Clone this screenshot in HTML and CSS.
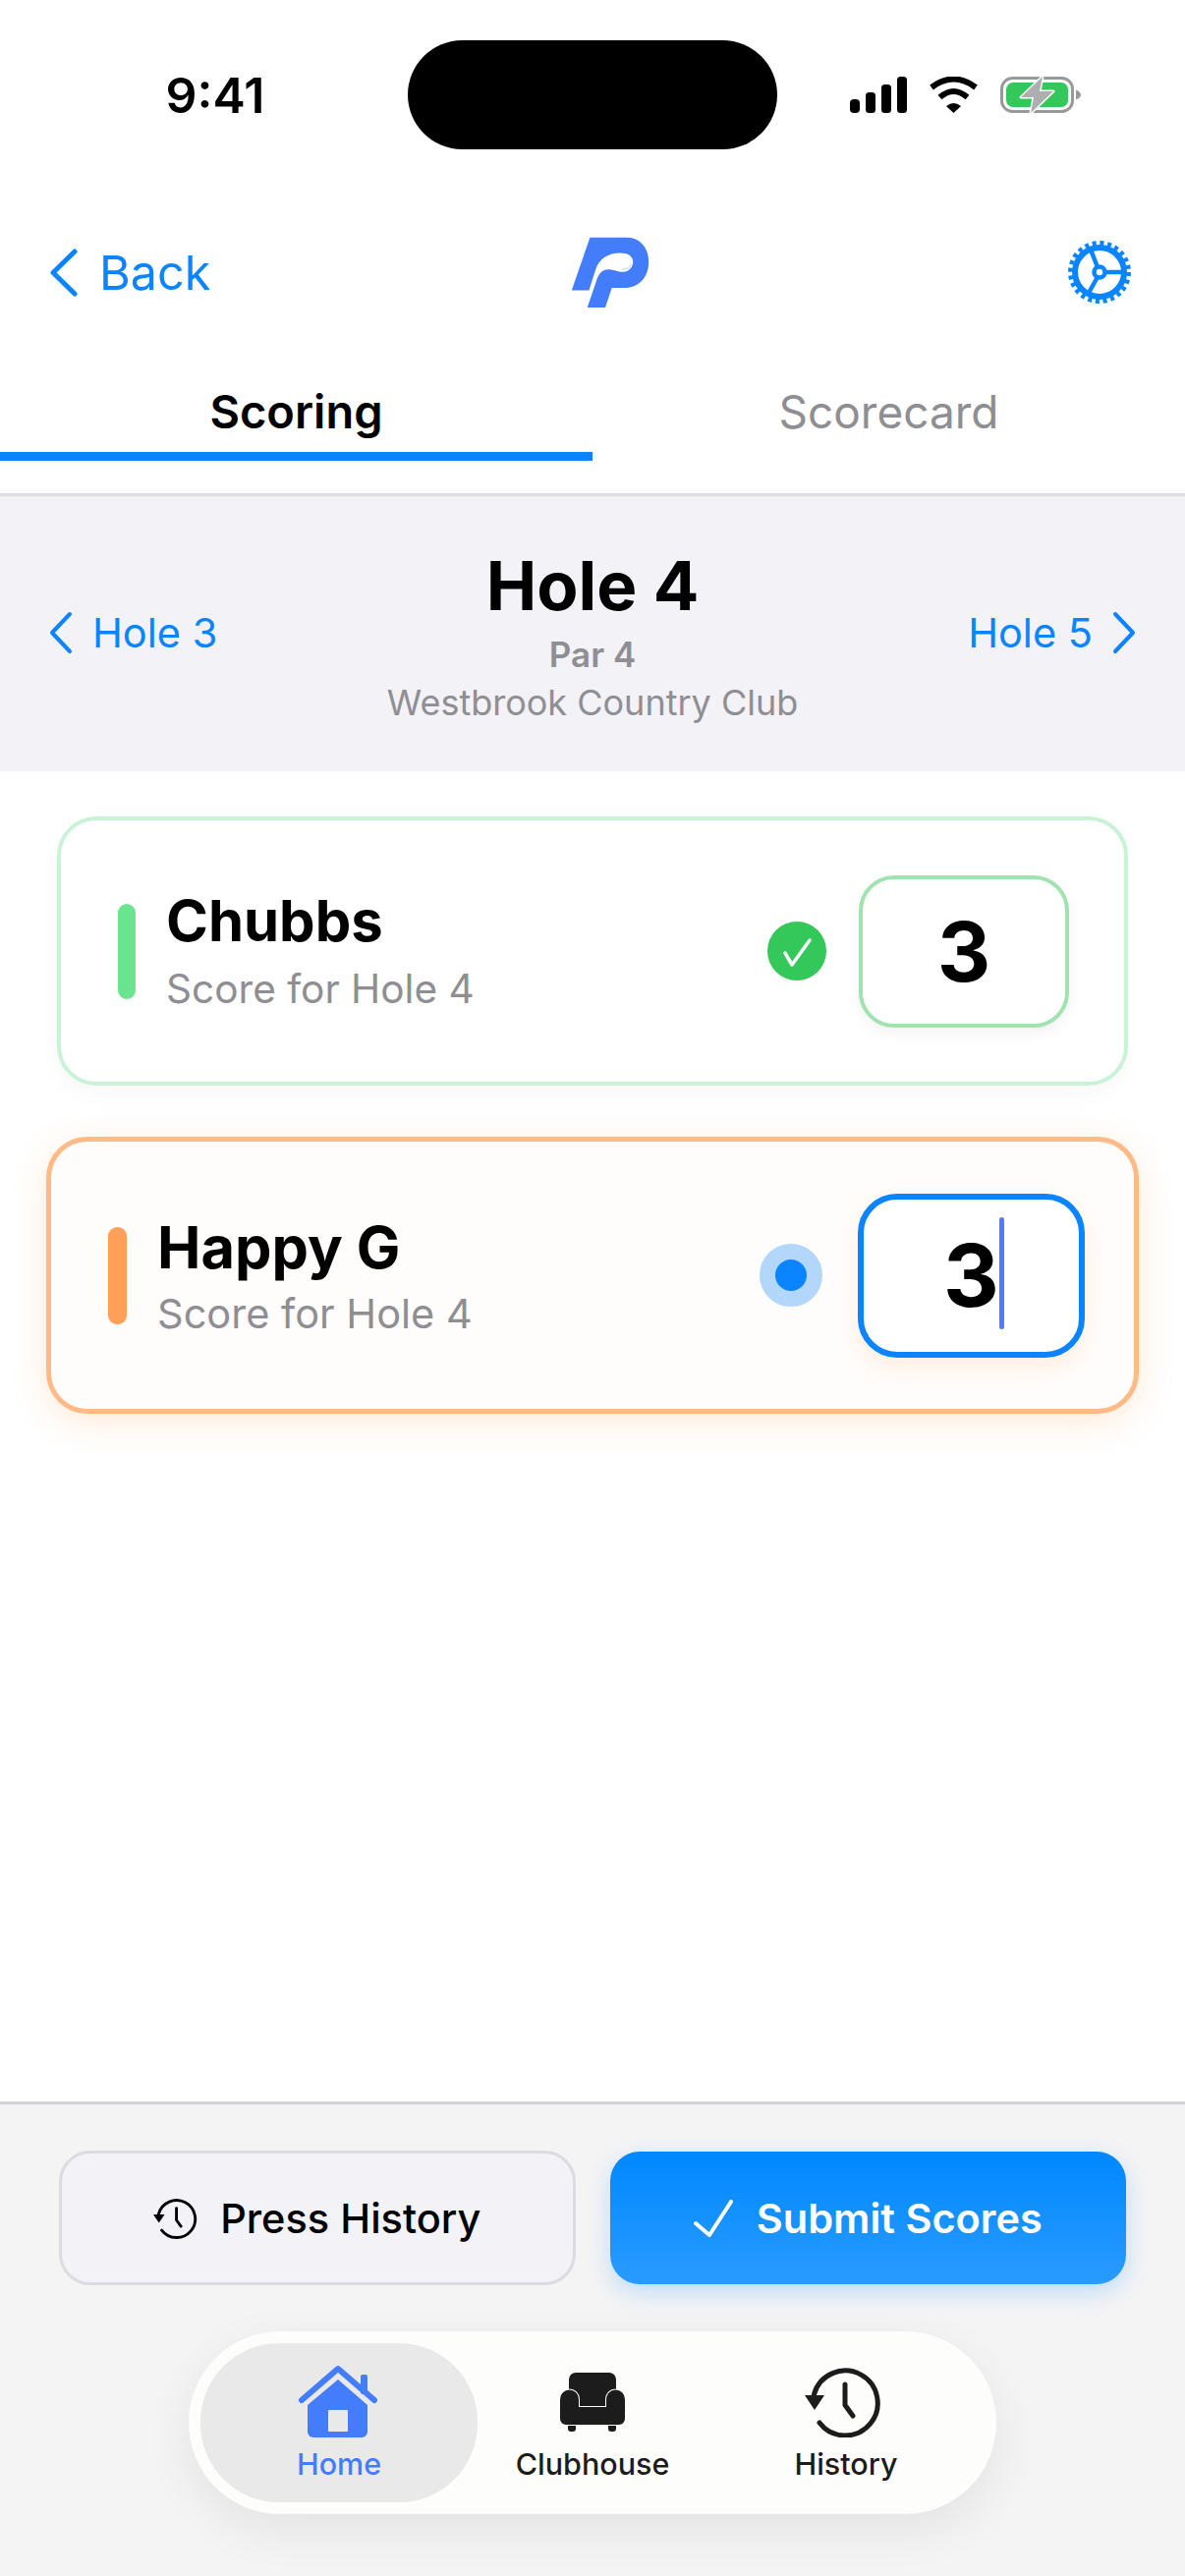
FILE: index.html
```html
<!DOCTYPE html>
<html>
<head>
    <title>Scoring</title>
    <link rel="stylesheet" href="styles.css">
</head>
<body>
    <svg class="defs" width="0" height="0">
        <symbol id="clock" viewBox="0 0 80 72">
            <path d="M9.5 28A33 33 0 1 1 15 57" fill="none" stroke="currentColor" stroke-width="5" stroke-linecap="round"/>
            <polygon points="0,29 20,29 10,44" fill="currentColor"/>
            <path d="M41 18V39L49 50" fill="none" stroke="currentColor" stroke-width="5" stroke-linecap="round" stroke-linejoin="round"/>
        </symbol>
    </svg>

    <div class="phone">
        <div class="status-bar">
            <div class="time">9:41</div>
            <div class="island"></div>
            <div class="status-icons">
                <svg width="58" height="37" viewBox="0 0 58 37" fill="#000">
                    <rect x="0" y="23" width="10" height="14" rx="4"/>
                    <rect x="16" y="16" width="10" height="21" rx="3.5"/>
                    <rect x="32" y="8" width="10" height="29" rx="3.5"/>
                    <rect x="48" y="0" width="10" height="37" rx="3.5"/>
                </svg>
                <svg width="51" height="37" viewBox="0 0 51 37">
                    <path d="M3 11Q25.5-6 48 11" fill="none" stroke="#000" stroke-width="6"/>
                    <path d="M11.5 21Q25.5 9 39.5 21" fill="none" stroke="#000" stroke-width="6"/>
                    <path d="M18 30Q25.5 24 33 30L25.5 37Z"/>
                </svg>
                <svg width="82" height="39" viewBox="0 0 82 39">
                    <rect x="1.5" y="2.5" width="72" height="34" rx="11" fill="none" stroke="#999" stroke-width="3"/>
                    <rect x="6" y="7" width="63" height="25" rx="7" fill="#34c759"/>
                    <path d="M77 14.5c3 1 5 3 5 5s-2 4-5 5Z" fill="#999"/>
                    <polygon points="43,1 21,22 34,22 31,38 54,16 40,16" fill="#aeaeb0" stroke="#fff" stroke-width="3" stroke-linejoin="round" paint-order="stroke"/>
                </svg>
            </div>
        </div>

        <div class="top-bar">
            <div class="back">
                <svg width="30" height="49" viewBox="0 0 30 49"><path d="M26 3L4 24.5L26 46" fill="none" stroke="#0a84ff" stroke-width="5" stroke-linecap="round" stroke-linejoin="round"/></svg>
                <span>Back</span>
            </div>
            <svg class="logo" width="80" height="73" viewBox="120 58 240 220">
                <path d="M178 60L290 60C335 60 358 95 358 135C358 185 325 215 285 215L245 215L225 275L170 275L197 195C205 170 215 158 235 158C250 158 262 166 280 166C298 166 310 150 310 135C310 118 295 108 270 108C235 108 205 125 195 160L175 222L122 222Z" fill="#437dfb"/>
                <path d="M276 158C290 158 300 152 304 142" fill="none" stroke="#b9d0fd" stroke-width="3"/>
            </svg>
            <svg class="gear" width="66" height="66" viewBox="0 0 66 66" fill="none" stroke="#0a84ff">
                <circle cx="33" cy="33" r="29" stroke-width="6" stroke-dasharray="4 3.6"/>
                <circle cx="33" cy="33" r="25" stroke-width="6"/>
                <path d="M31 28L24 10M38 33H57M31 38L22 54" stroke-width="4.5"/>
                <circle cx="33" cy="33" r="5.5" stroke-width="4.5" fill="#fff"/>
            </svg>
        </div>

        <div class="tabs">
            <div class="tab tab-active">Scoring</div>
            <div class="tab">Scorecard</div>
        </div>

        <div class="hole-nav">
            <div class="hole-link">
                <svg width="24" height="44" viewBox="0 0 24 44"><path d="M21 3L3 22L21 41" fill="none" stroke="#0a84ff" stroke-width="4" stroke-linecap="round" stroke-linejoin="round"/></svg>
                <span>Hole 3</span>
            </div>
            <div class="hole-info">
                <div class="hole-title">Hole 4</div>
                <div class="hole-par">Par 4</div>
                <div class="hole-club">Westbrook Country Club</div>
            </div>
            <div class="hole-link hole-link-next">
                <span>Hole 5</span>
                <svg width="24" height="44" viewBox="0 0 24 44"><path d="M3 3L21 22L3 41" fill="none" stroke="#0a84ff" stroke-width="4" stroke-linecap="round" stroke-linejoin="round"/></svg>
            </div>
        </div>

        <div class="scores">
            <div class="player-card card-done">
                <div class="accent"></div>
                <div class="player-text">
                    <div class="player-name">Chubbs</div>
                    <div class="player-sub">Score for Hole 4</div>
                </div>
                <svg class="status-check" width="60" height="60" viewBox="0 0 60 60">
                    <circle cx="30" cy="30" r="30" fill="#34c759"/>
                    <path d="M18 32L25 44L43 19" fill="none" stroke="#fff" stroke-width="3.5" stroke-linecap="round" stroke-linejoin="round"/>
                </svg>
                <div class="score-box"><span class="score-digit">3</span></div>
            </div>

            <div class="player-card card-active">
                <div class="accent"></div>
                <div class="player-text">
                    <div class="player-name">Happy G</div>
                    <div class="player-sub">Score for Hole 4</div>
                </div>
                <div class="status-dot"></div>
                <div class="score-box"><span class="score-digit">3<i class="caret"></i></span></div>
            </div>
        </div>

        <div class="footer">
            <div class="actions">
                <div class="btn btn-secondary">
                    <svg width="46" height="42"><use href="#clock"/></svg>
                    <span>Press History</span>
                </div>
                <div class="btn btn-primary">
                    <svg width="40" height="38" viewBox="0 0 40 38"><path d="M2 24L16 36L38 2" fill="none" stroke="#fff" stroke-width="4" stroke-linecap="round" stroke-linejoin="round"/></svg>
                    <span>Submit Scores</span>
                </div>
            </div>

            <div class="bottom-nav">
                <div class="nav-item nav-active">
                    <div class="nav-icon">
                        <svg width="90" height="76" viewBox="1 0 90 76">
                            <rect x="68" y="10" width="7" height="20" rx="2" fill="#437dfb"/>
                            <path d="M8 36L45 4L82 36" fill="none" stroke="#437dfb" stroke-width="6" stroke-linecap="round" stroke-linejoin="round"/>
                            <path d="M45 15L14 41V68a6 6 0 0 0 6 6H69a6 6 0 0 0 6-6V41Z" fill="#437dfb"/>
                            <rect x="35" y="46" width="20" height="22" fill="#e9e9ea"/>
                        </svg>
                    </div>
                    <span>Home</span>
                </div>
                <div class="nav-item">
                    <div class="nav-icon">
                        <svg width="66" height="60" viewBox="0 0 66 60">
                            <rect x="9" y="0" width="48" height="36" rx="7" fill="#1c1c1c"/>
                            <rect x="8" y="50" width="8" height="10" rx="3" fill="#1c1c1c"/>
                            <rect x="49" y="50" width="8" height="10" rx="3" fill="#1c1c1c"/>
                            <path d="M0 27a9.5 9.5 0 0 1 19 0V35H47V27a9.5 9.5 0 0 1 19 0V47a6 6 0 0 1-6 6H6a6 6 0 0 1-6-6Z" fill="#1c1c1c" stroke="#fdfdfc" stroke-width="2" paint-order="stroke"/>
                        </svg>
                    </div>
                    <span>Clubhouse</span>
                </div>
                <div class="nav-item">
                    <div class="nav-icon">
                        <svg class="clock-icon" width="80" height="72"><use href="#clock"/></svg>
                    </div>
                    <span>History</span>
                </div>
            </div>
        </div>
    </div>
</body>
</html>
```

FILE: styles.css
```css
* {
    box-sizing: border-box;
}

body {
    margin: 0;
    font-family: Inter, "Noto Sans", sans-serif;
    background: #fff;
    color: #000;
}

.defs {
    display: block;
    height: 0;
}

.phone {
    height: 2622px;
    display: flex;
    flex-direction: column;
    overflow: hidden;
}

.status-bar {
    display: grid;
    grid-template-columns: 415px 376px 415px;
    align-items: center;
    padding-top: 41px;
}

.time {
    font-size: 50px;
    font-weight: 600;
    text-align: center;
    padding-left: 23px;
}

.island {
    height: 111px;
    background: #000;
    border-radius: 56px;
}

.status-icons {
    display: flex;
    align-items: center;
    gap: 22px;
    padding-left: 74px;
}

.top-bar {
    display: grid;
    grid-template-columns: 531px 80px 1fr;
    align-items: center;
    height: 74px;
    margin-top: 88px;
    padding: 0 54px 0 50px;
}

.back {
    display: flex;
    align-items: center;
    gap: 21px;
    color: #0a84ff;
    font-size: 48.5px;
}

.gear {
    justify-self: end;
}

.tabs {
    display: flex;
    padding-top: 81px;
    padding-bottom: 33px;
    border-bottom: 3px solid #dedee2;
}

.tab {
    flex: 1;
    height: 74px;
    line-height: 48px;
    text-align: center;
    font-size: 46px;
    color: #8e8e93;
}

.tab-active {
    color: #000;
    font-weight: 600;
    font-size: 47px;
    border-bottom: 9px solid #0a84ff;
}

.hole-nav {
    display: grid;
    grid-template-columns: 1fr auto 1fr;
    align-items: center;
    height: 280px;
    padding: 0 50px;
    background: #f2f2f7;
}

.hole-link {
    display: flex;
    align-items: center;
    gap: 20px;
    margin-bottom: 2px;
    color: #0a84ff;
    font-size: 41.5px;
}

.hole-link-next {
    justify-content: flex-end;
}

.hole-info {
    text-align: center;
}

.hole-title {
    font-size: 69px;
    font-weight: 700;
    line-height: 80px;
}

.hole-par {
    margin-top: 10px;
    font-size: 35px;
    font-weight: 600;
    line-height: 40px;
    color: #8e8e93;
}

.hole-club {
    margin-top: 9px;
    font-size: 36px;
    line-height: 40px;
    color: #8e8e93;
}

.scores {
    flex: 1;
    padding-top: 46px;
}

.player-card {
    display: flex;
    align-items: center;
    background: #fff;
}

.card-done {
    height: 274px;
    margin: 0 58px;
    padding: 0 56px 0 58px;
    border: 4px solid #c8f3d6;
    border-radius: 40px;
    box-shadow: 0 8px 24px rgba(0, 0, 0, 0.03);
}

.card-active {
    height: 282px;
    margin: 52px 47px 0;
    padding: 0 50px 0 58px;
    background: #fffdfc;
    border: 5px solid #ffba85;
    border-radius: 42px;
    box-shadow: 0 8px 36px rgba(255, 149, 60, 0.2);
}

.accent {
    width: 18px;
    height: 97px;
    border-radius: 9px;
}

.card-done .accent {
    background: #6ae48e;
}

.card-active .accent {
    width: 19px;
    height: 99px;
    background: #ff9f58;
}

.player-text {
    flex: 1;
    margin-left: 31px;
}

.player-name {
    font-weight: 700;
    line-height: 68px;
}

.card-done .player-name {
    font-size: 58px;
    margin-top: -2px;
}

.card-active .player-name {
    font-size: 59.5px;
}

.player-sub {
    line-height: 48px;
    color: #8e8e93;
}

.card-done .player-sub {
    margin-top: 12px;
    font-size: 40.6px;
}

.card-active .player-sub {
    margin-top: 10px;
    font-size: 41.5px;
}

.status-check {
    margin-right: 33px;
}

.status-dot {
    width: 64px;
    height: 64px;
    margin-right: 36px;
    border: 16px solid #b3d6fb;
    border-radius: 50%;
    background: #0a84ff;
}

.score-box {
    display: flex;
    align-items: center;
    justify-content: center;
    font-weight: 700;
    background: #fff;
}

.card-done .score-box {
    width: 214px;
    height: 155px;
    font-size: 84px;
    border: 4px solid #a0e3ae;
    border-radius: 36px;
    box-shadow: 0 6px 16px rgba(0, 0, 0, 0.05);
}

.card-active .score-box {
    width: 231px;
    height: 167px;
    font-size: 88px;
    border: 6px solid #0a84ff;
    border-radius: 40px;
    box-shadow: 0 10px 26px rgba(255, 149, 60, 0.15);
}

.score-digit {
    position: relative;
}

.caret {
    position: absolute;
    left: 100%;
    top: -6px;
    width: 5px;
    height: 114px;
    border-radius: 3px;
    background: #4a7dff;
}

.footer {
    height: 483px;
    background: #f4f4f5;
    border-top: 3px solid #d1d1d6;
}

.actions {
    display: grid;
    grid-template-columns: 1fr 1fr;
    gap: 35px;
    padding: 47px 60px 0;
}

.btn {
    display: flex;
    align-items: center;
    justify-content: center;
    height: 137px;
    font-size: 41.5px;
    font-weight: 500;
}

.btn-secondary {
    gap: 22px;
    background: #f2f2f7;
    border: 3px solid #dcdce0;
    border-radius: 32px;
}

.btn-primary {
    gap: 24px;
    height: 135px;
    margin-top: 1px;
    color: #fff;
    font-weight: 600;
    background: linear-gradient(to bottom, #0088ff, #2a9bff);
    border-radius: 30px;
    box-shadow: 0 8px 24px rgba(0, 136, 255, 0.22);
}

.bottom-nav {
    display: grid;
    grid-template-columns: 282px 234px 282px;
    width: 822px;
    height: 186px;
    margin: 47px auto 0;
    padding: 12px;
    background: #fdfdfc;
    border-radius: 93px;
    box-shadow: 0 16px 50px rgba(0, 0, 0, 0.07);
}

.nav-item {
    display: flex;
    flex-direction: column;
    align-items: center;
    padding-top: 22px;
    font-size: 30.5px;
    font-weight: 500;
    line-height: 36px;
    color: #1c1c1c;
}

.nav-icon {
    display: flex;
    align-items: center;
    justify-content: center;
    height: 76px;
    margin-bottom: 7px;
}

.clock-icon {
    margin-right: 4px;
}

.nav-active {
    color: #437dfb;
    background: #e9e9ea;
    border-radius: 80px;
}
```
